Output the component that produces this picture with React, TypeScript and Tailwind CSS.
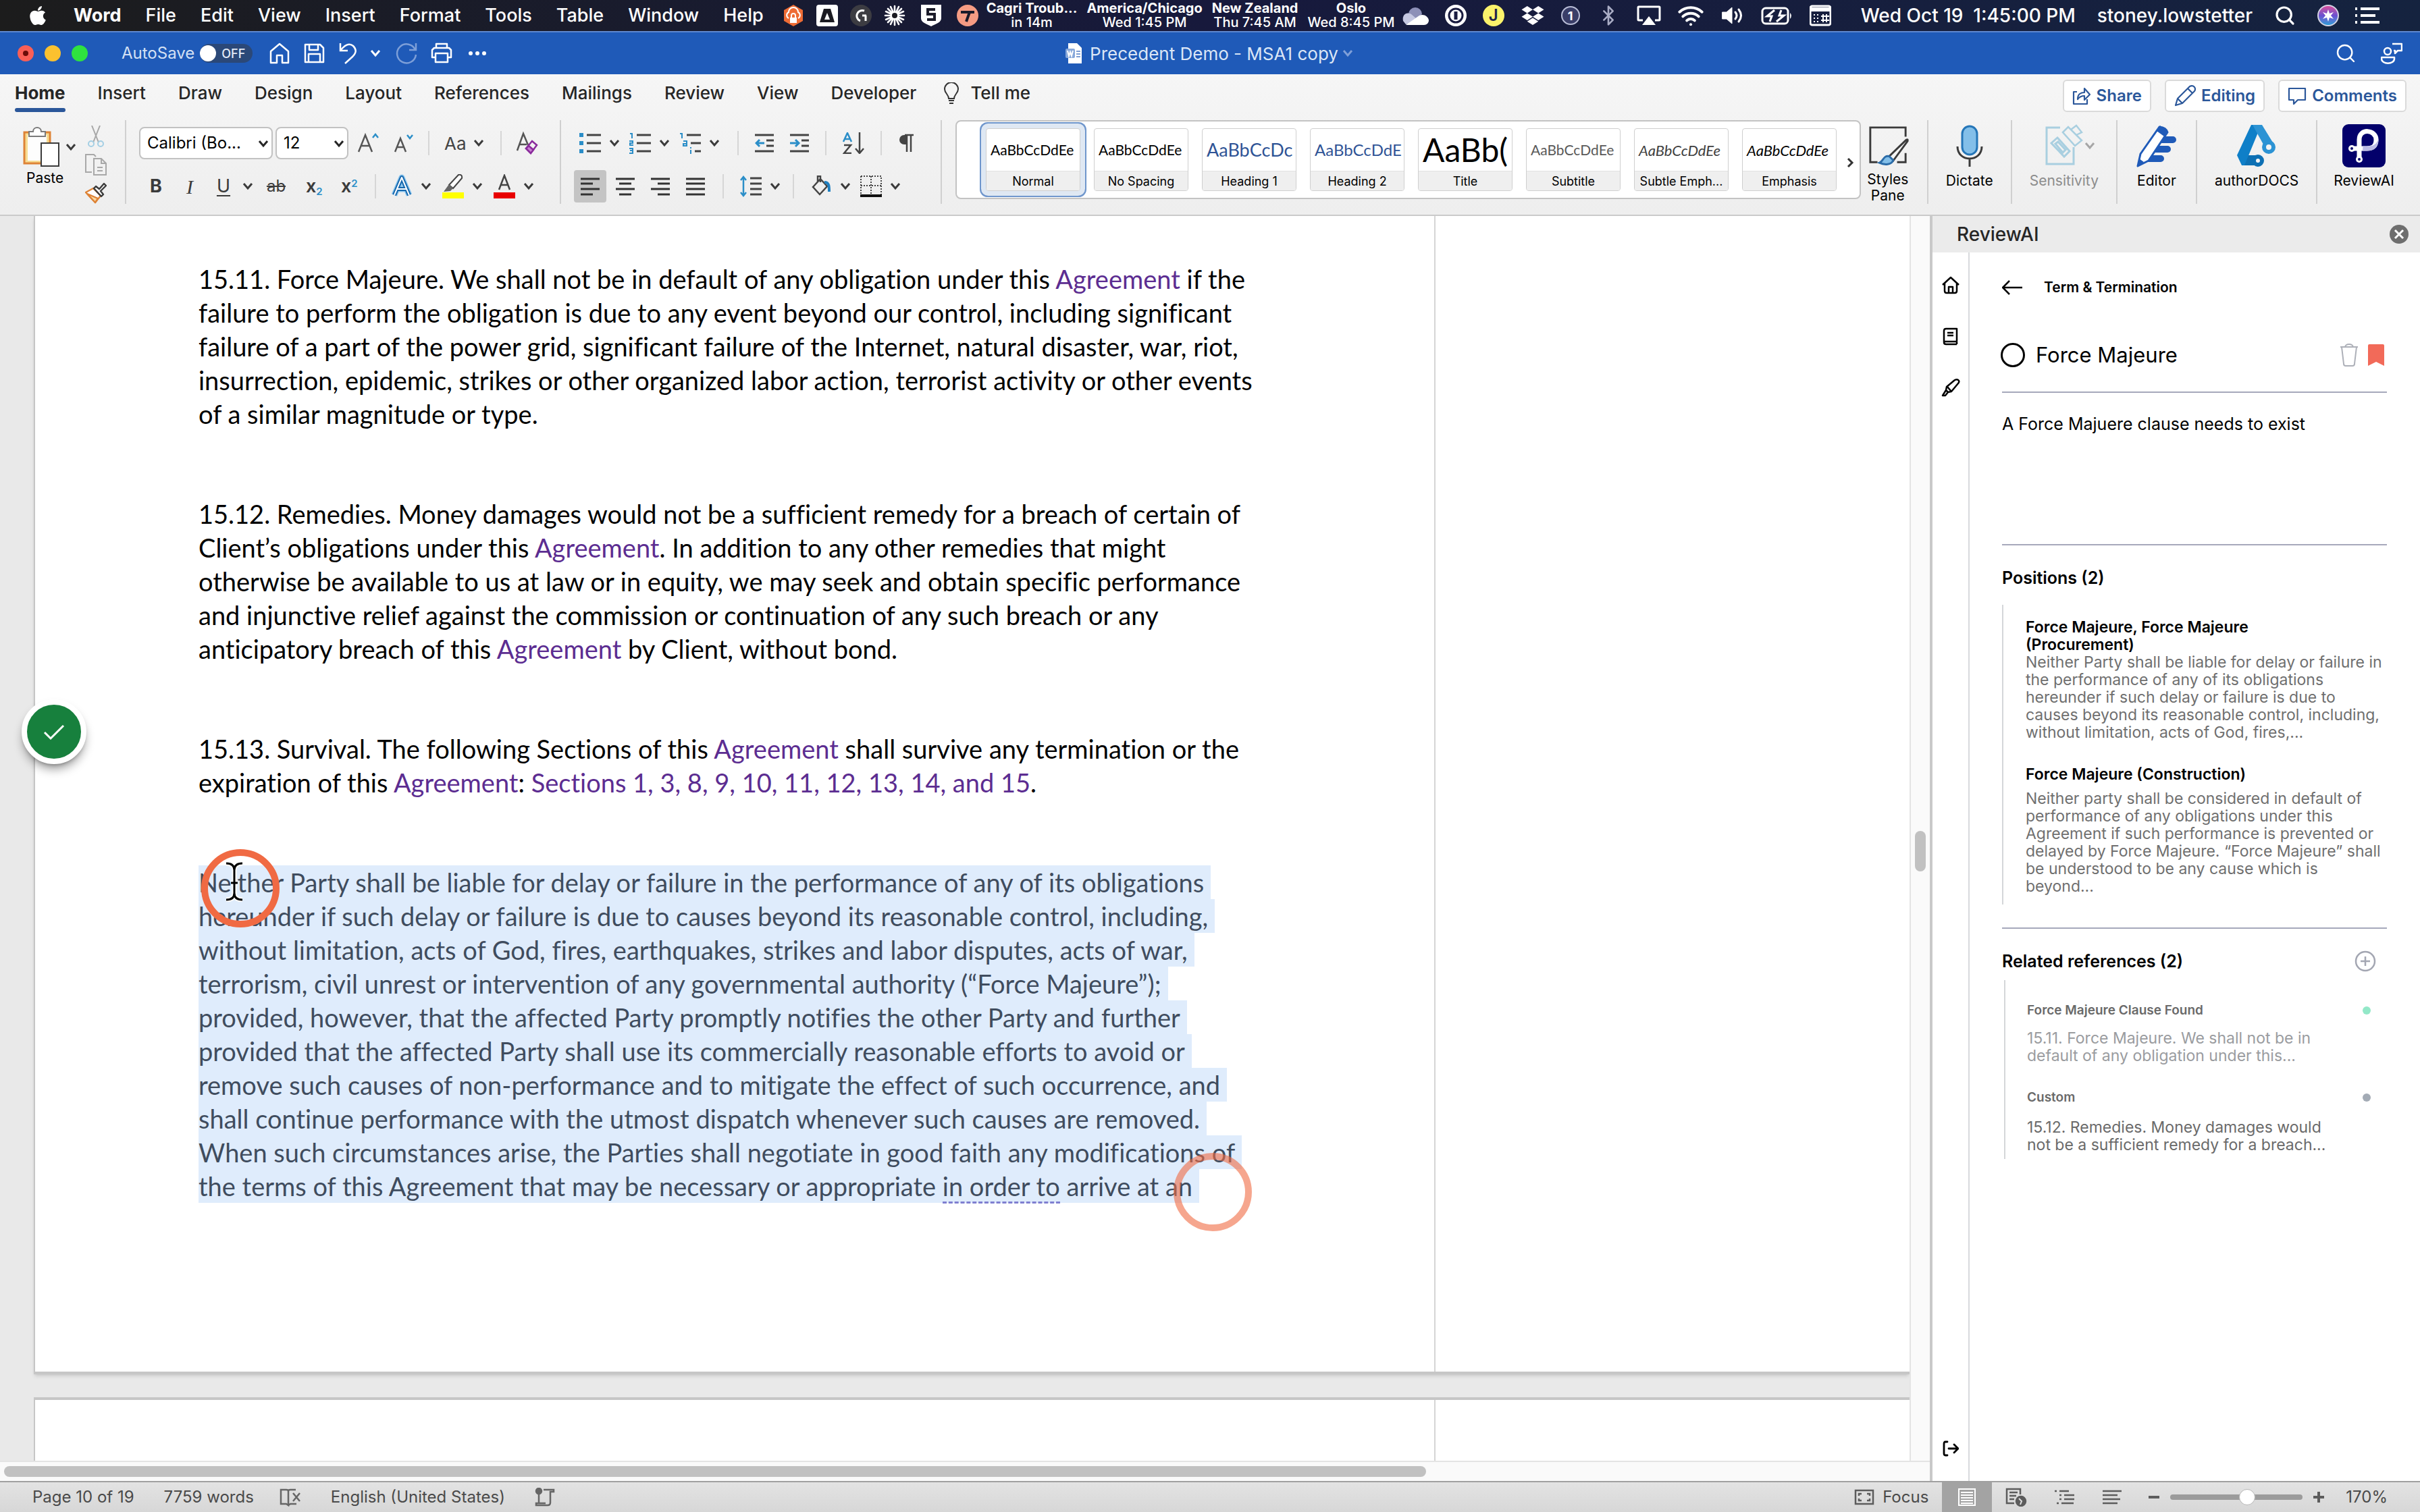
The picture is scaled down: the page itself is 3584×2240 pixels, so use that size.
import type { ReactNode } from 'react';
import { FaApple, FaDropbox } from 'react-icons/fa';
import { Bluetooth, Search, Wifi } from 'lucide-react';

const MENUS = ['File', 'Edit', 'View', 'Insert', 'Format', 'Tools', 'Table', 'Window', 'Help'];

const CLOCKS = [
  { place: 'Cagri Troub...', time: 'in 14m' },
  { place: 'America/Chicago', time: 'Wed 1:45 PM' },
  { place: 'New Zealand', time: 'Thu 7:45 AM' },
  { place: 'Oslo', time: 'Wed 8:45 PM' },
];

const TABS = ['Home', 'Insert', 'Draw', 'Design', 'Layout', 'References', 'Mailings', 'Review', 'View', 'Developer'];

const STYLES = [
  { name: 'Normal', sample: 'AaBbCcDdEe', look: 'text-[21px] text-black' },
  { name: 'No Spacing', sample: 'AaBbCcDdEe', look: 'text-[21px] text-black' },
  { name: 'Heading 1', sample: 'AaBbCcDc', look: 'text-[27px] text-[#2f5496]' },
  { name: 'Heading 2', sample: 'AaBbCcDdE', look: 'text-[24px] text-[#2f5496]' },
  { name: 'Title', sample: 'AaBb(', look: 'text-[48px] text-black' },
  { name: 'Subtitle', sample: 'AaBbCcDdEe', look: 'text-[21px] text-[#5a5a5a]' },
  { name: 'Subtle Emph...', sample: 'AaBbCcDdEe', look: 'text-[22px] italic text-[#404040]' },
  { name: 'Emphasis', sample: 'AaBbCcDdEe', look: 'text-[22px] italic text-black' },
];

const SELECTED_LINES: ReactNode[] = [
  'Neither Party shall be liable for delay or failure in the performance of any of its obligations',
  'hereunder if such delay or failure is due to causes beyond its reasonable control, including,',
  'without limitation, acts of God, fires, earthquakes, strikes and labor disputes, acts of war,',
  'terrorism, civil unrest or intervention of any governmental authority (“Force Majeure”);',
  'provided, however, that the affected Party promptly notifies the other Party and further',
  'provided that the affected Party shall use its commercially reasonable efforts to avoid or',
  'remove such causes of non-performance and to mitigate the effect of such occurrence, and',
  'shall continue performance with the utmost dispatch whenever such causes are removed.',
  'When such circumstances arise, the Parties shall negotiate in good faith any modifications of',
  <>
    the terms of this Agreement that may be necessary or appropriate{' '}
    <span className="border-b-3 border-dashed border-[#7f7fd0]">in order to</span> arrive at an
  </>,
];

export default function App() {
  return (
    <div className="flex h-screen flex-col overflow-hidden bg-[#ececec] font-['Inter',sans-serif] text-[#262626]">
      <MenuBar />
      <TitleBar />
      <Ribbon />
      <div className="flex min-h-0 flex-1">
        <DocumentArea />
        <ReviewPane />
      </div>
      <StatusBar />
    </div>
  );
}

/* ---------- macOS menu bar ---------- */

function MenuBar() {
  return (
    <header className="flex h-[46px] flex-none items-center bg-linear-to-r from-[#1c1c1c] via-[#17193c] to-[#15233f] pr-[60px] pl-10 text-[27px] font-medium text-white">
      <FaApple className="h-8 w-8" />
      <nav className="ml-[37px] flex items-center gap-9">
        <button className="font-bold">Word</button>
        {MENUS.map((m) => (
          <button key={m}>{m}</button>
        ))}
      </nav>
      <div className="ml-7 flex items-center gap-[18px]">
        <svg className="h-8 w-8" viewBox="0 0 32 32">
          <path d="M16 0 30 8v16l-14 8L2 24V8z" fill="#ee6c35" />
          <path d="M9 20a5 5 0 0 1 0-9 7 7 0 0 1 14 0 5 5 0 0 1 0 9" fill="none" stroke="#fff" strokeWidth="2" />
          <path d="M11 19h10v8H11z" fill="#fff" />
          <path d="M13 19v-3a3 3 0 0 1 6 0v3" fill="none" stroke="#fff" strokeWidth="2" />
        </svg>
        <svg className="h-8 w-8" viewBox="0 0 32 32">
          <rect width="32" height="32" rx="4" fill="#fff" />
          <path d="M11 6h10l6 20H5z" fill="#1b1b22" />
          <path d="m16 12 4 10h-8z" fill="#fff" />
        </svg>
        <svg className="h-8 w-8" viewBox="0 0 32 32">
          <circle cx="16" cy="16" r="16" fill="#3c3c42" />
          <path d="M21 9a8 8 0 1 0-6 15M24 16h-6M23 16v8" fill="none" stroke="#fff" strokeWidth="3" />
        </svg>
        <svg className="h-8 w-8" viewBox="0 0 32 32" stroke="#fff" strokeLinecap="round">
          <path d="M16 2v28M2 16h28M6 6l20 20M26 6 6 26M10 3l12 26M22 3 10 29M3 10l26 12M3 22l26-12" strokeWidth="2.6" />
          <circle cx="16" cy="16" r="4" fill="#1b1b22" stroke="none" />
        </svg>
        <svg className="ml-1 h-8 w-8" viewBox="0 0 32 32">
          <path d="M1 0h30v20c0 6-7 8-15 12C8 28 1 26 1 20z" fill="#fff" />
          <path d="M22 7H11v7h10v8H10" fill="none" stroke="#1b1b2a" strokeWidth="4" />
        </svg>
        <svg className="ml-1 h-8 w-8" viewBox="0 0 32 32">
          <circle cx="16" cy="16" r="16" fill="#f59b83" />
          <path d="M6 11h20M19 11l-5 14" fill="none" stroke="#1b1b2a" strokeWidth="4" />
        </svg>
      </div>
      <div className="ml-3 flex gap-3.5 text-center text-[20px] leading-[21px]">
        {CLOCKS.map((c) => (
          <div key={c.place}>
            <div className="font-bold">{c.place}</div>
            <div>{c.time}</div>
          </div>
        ))}
      </div>
      <div className="ml-auto flex items-center gap-6">
        <svg className="h-8 w-10" viewBox="0 0 40 32">
          <path d="M10 14a10 10 0 0 1 20 0l-10 8z" fill="#8d90b8" />
          <path d="M2 24C0 14 8 10 14 14l14 12-22 3z" fill="#c5c8e2" />
          <path d="M6 30 26 16c6-3 13 1 14 7 0 4-3 7-7 7z" fill="#fff" />
        </svg>
        <svg className="h-8 w-8" viewBox="0 0 32 32">
          <circle cx="16" cy="16" r="16" fill="#fff" />
          <circle cx="16" cy="16" r="10" fill="none" stroke="#1a1c40" strokeWidth="3" />
          <path d="M16 10v12" stroke="#1a1c40" strokeWidth="5" />
        </svg>
        <span className="flex h-8 w-8 items-center justify-center rounded-full bg-[#fbf36b] text-[24px] font-semibold text-[#20224a]">
          J
        </span>
        <FaDropbox className="h-8 w-9" />
        <span className="flex h-7 w-7 items-center justify-center rounded-full border-2 border-[#b9bdd6] bg-[#3a3e68] text-[18px] font-bold">
          1
        </span>
        <Bluetooth className="h-8 w-9 text-[#a9acc4]" strokeWidth={2} />
        <svg className="h-8 w-9" viewBox="0 0 36 32" fill="none" stroke="#fff" strokeWidth="3">
          <path d="M9 23H3a1 1 0 0 1-1-1V4a1 1 0 0 1 1-1h30a1 1 0 0 1 1 1v18a1 1 0 0 1-1 1h-6" />
          <path d="m18 17 10 13H8z" fill="#fff" stroke="none" />
        </svg>
        <Wifi className="h-10 w-10" strokeWidth={2.4} />
        <svg className="h-8 w-9" viewBox="0 0 36 32" fill="none" stroke="#fff" strokeWidth="3" strokeLinecap="round">
          <path d="M3 11h6l8-7v24l-8-7H3z" fill="#fff" strokeWidth="1" />
          <path d="M22 11q4 5 0 10M27 7q7 9 0 18" />
        </svg>
        <svg className="h-8 w-12" viewBox="0 0 48 32">
          <rect x="2" y="5" width="38" height="23" rx="5" fill="none" stroke="#fff" strokeWidth="3" />
          <path d="M43 12q4 4 0 9z" fill="#fff" />
          <path d="M20 8 9 17h7l-3 8M23 25l11-9h-7l3-8" fill="none" stroke="#fff" strokeWidth="3" />
        </svg>
        <svg className="h-8 w-8" viewBox="0 0 32 32">
          <rect x="1" y="2" width="30" height="28" rx="3" fill="none" stroke="#fff" strokeWidth="3" />
          <path d="M1 4h30v6H1z" fill="#fff" />
          <path d="M6 15h2M6 20h2M6 25h2M11 15h2M11 20h2M11 25h2" stroke="#fff" strokeWidth="2" />
          <path d="M20 14v12M25 14v12M17 17h12M17 23h12" stroke="#fff" strokeWidth="2" />
        </svg>
        <span className="ml-5 text-[28px] whitespace-pre">Wed Oct 19  1:45:00 PM</span>
        <span className="ml-2 text-[28px]">stoney.lowstetter</span>
        <Search className="ml-2 h-8 w-8" strokeWidth={2.4} />
        <span className="ml-2 flex h-8 w-8 items-center justify-center rounded-full border-2 border-[#d4d4e4] bg-linear-to-b from-[#d8479a] via-[#6a4fd0] to-[#1b9ad8]">
          <svg className="h-6 w-6" viewBox="0 0 24 24" fill="#fff">
            <path d="m12 3 2 6 6-2-4 5 4 5-6-2-2 6-2-6-6 2 4-5-4-5 6 2z" />
          </svg>
        </span>
        <svg className="h-8 w-9" viewBox="0 0 36 32" stroke="#fff" strokeWidth="4">
          <path d="M0 6h3M8 6h28M0 16h3M8 16h22M0 26h3M8 26h28" />
        </svg>
      </div>
    </header>
  );
}

/* ---------- window title ---------- */

function TitleBar() {
  return (
    <div className="flex h-16 flex-none items-center border-t-2 border-[#5d87cf] bg-[#1f5ab8] px-[26px] text-white">
      <div className="flex flex-1 items-center">
        <div className="flex gap-4">
          <button aria-label="Close" className="flex h-6 w-6 items-center justify-center rounded-full bg-[#f95f56]">
            <span className="h-2 w-2 rounded-full bg-[#6b0d08]" />
          </button>
          <button aria-label="Minimize" className="h-6 w-6 rounded-full bg-[#fbc12f]" />
          <button aria-label="Zoom" className="h-6 w-6 rounded-full bg-[#2fe23f]" />
        </div>
        <span className="ml-[50px] text-[24px] text-[#d3e0f4]">AutoSave</span>
        <button
          role="switch"
          aria-checked="false"
          aria-label="AutoSave"
          className="ml-2 flex h-7 w-[78px] items-center gap-2 rounded-full bg-[#2b4878] text-[18px] font-medium text-[#e3ebf7]"
        >
          <span className="h-6 w-6 rounded-full bg-white" />
          OFF
        </button>
        <div className="ml-6 flex items-center gap-5">
          <IconButton label="Home">
            <svg className="h-8 w-8" viewBox="0 0 32 32" fill="none" stroke="#fff" strokeWidth="2.5">
              <path d="M3 13 16 2l13 11v17h-9V19h-8v11H3z" strokeLinejoin="round" />
            </svg>
          </IconButton>
          <IconButton label="Save">
            <svg className="h-8 w-8" viewBox="0 0 32 32" fill="none" stroke="#fff" strokeWidth="2.5">
              <path d="M2 3h22l5 5v21H2zM8 3v8h13V3M7 29V17h17v12" strokeLinejoin="round" />
            </svg>
          </IconButton>
          <IconButton label="Undo">
            <svg className="h-8 w-7" viewBox="0 0 28 32" fill="none" stroke="#fff" strokeWidth="2.5">
              <path d="M2 1v11h11M2 12C8 4 15 0 21 5c6 6 4 11-1 16L9 31" />
            </svg>
          </IconButton>
          <Chevron className="-ml-1 text-white" />
          <IconButton label="Redo">
            <svg className="h-8 w-8" viewBox="0 0 32 32" fill="none" stroke="#7d9fd8" strokeWidth="2.5">
              <path d="M30 1v10H20M29 11A14 14 0 1 0 30 18" />
            </svg>
          </IconButton>
          <IconButton label="Print">
            <svg className="h-8 w-8" viewBox="0 0 32 32" fill="none" stroke="#fff" strokeWidth="2.5">
              <path d="M8 8V2h16v6M7 22H2V11l3-3h22l3 3v11h-5M7 16h18v13H7z" strokeLinejoin="round" />
            </svg>
          </IconButton>
          <IconButton label="More">
            <svg className="ml-1 h-8 w-7" viewBox="0 0 28 32" fill="#fff">
              <circle cx="3" cy="16" r="3" />
              <circle cx="13" cy="16" r="3" />
              <circle cx="23" cy="16" r="3" />
            </svg>
          </IconButton>
        </div>
      </div>
      <div className="flex items-center text-[26px] text-[#dbe6f6]">
        <svg className="mr-3 h-[30px] w-6" viewBox="0 0 24 30">
          <path d="M4 0h13l7 7v23H4z" fill="#fff" />
          <rect y="8" width="14" height="14" rx="2" fill="#88a8da" />
          <path d="m3 11 2 8 2-6 2 6 2-8" fill="none" stroke="#fff" strokeWidth="2" />
          <path d="M16 12h6M16 16h6M16 20h6" stroke="#7f9fd4" strokeWidth="2" />
        </svg>
        Precedent Demo - MSA1 copy
        <Chevron className="ml-1 text-[#7f9fd8]" />
      </div>
      <div className="flex flex-1 items-center justify-end gap-9">
        <IconButton label="Search">
          <Search className="h-8 w-8" strokeWidth={1.8} />
        </IconButton>
        <IconButton label="Presence">
          <svg className="h-8 w-8" viewBox="0 0 32 32" fill="none" stroke="#fff" strokeWidth="2.5">
            <circle cx="10" cy="13" r="5" />
            <path d="M1 22h19v2c0 9-19 9-19 0zM17 2h14v10h-6l-4 4v-4h-2" strokeLinejoin="round" />
          </svg>
        </IconButton>
      </div>
    </div>
  );
}

/* ---------- ribbon ---------- */

function Ribbon() {
  return (
    <section className="flex-none border-b-2 border-[#cacaca] bg-linear-to-b from-[#f6f6f6] to-[#eeeeee] pb-4">
      <div className="flex h-[68px] items-start pr-5 pl-[22px]">
        <nav className="flex items-start gap-12 pt-2.5 text-[26px] font-medium">
          {TABS.map((tab) =>
            tab === 'Home' ? (
              <button key={tab} className="flex flex-col font-bold">
                <span className="leading-9">{tab}</span>
                <span className="mt-1 h-1.5 w-full rounded-full bg-[#2b579a]" />
              </button>
            ) : (
              <button key={tab} className="leading-9">
                {tab}
              </button>
            ),
          )}
          <button className="flex items-center gap-4 leading-9">
            <svg className="-ml-2 h-8 w-6" viewBox="0 0 24 32" fill="none" stroke="#333" strokeWidth="2">
              <path d="M8 24c0-6-6-8-6-14a10 10 0 0 1 20 0c0 6-6 8-6 14zM8 27h8M9 31h6" />
            </svg>
            Tell me
          </button>
        </nav>
        <div className="ml-auto flex gap-5 pt-2 text-[24px] font-semibold text-[#2b579a]">
          <PillButton label="Share">
            <svg className="h-7 w-7" viewBox="0 0 28 28" fill="none" stroke="#2b579a" strokeWidth="2.2">
              <path d="M7 8H2v18h20v-7M8 19c0-8 5-10 10-10V3l8 9-8 8v-6c-4 0-7 1-10 5z" strokeLinejoin="round" />
            </svg>
          </PillButton>
          <PillButton label="Editing">
            <svg className="h-8 w-8" viewBox="0 0 32 32" fill="none" stroke="#2b579a" strokeWidth="2.2">
              <path d="m2 30 3-10L23 2q4-2 7 1 2 3 0 6L12 27zM20 5l7 7M5 20l7 7" strokeLinejoin="round" />
            </svg>
          </PillButton>
          <PillButton label="Comments">
            <svg className="h-7 w-7" viewBox="0 0 28 28" fill="none" stroke="#2b579a" strokeWidth="2.2">
              <path d="M2 3h24v17H15l-6 6v-6H2z" strokeLinejoin="round" />
            </svg>
          </PillButton>
        </div>
      </div>

      <div className="flex h-[124px]">
        <ClipboardGroup />
        <Divider />
        <FontGroup />
        <Divider />
        <ParagraphGroup />
        <Divider />
        <StyleGallery />
        <BigButton label="Styles Pane" className="mr-[26px] ml-2 w-16">
          <svg className="h-16 w-16" viewBox="0 0 64 64" fill="none" stroke="#3b3b3b" strokeWidth="3">
            <path d="M16 58H5V5h54v14M59 44v14H46" />
            <path d="M60 24q3-2 2 2L40 56l-7-6z" fill="#f5f5f5" />
            <path d="M34 49c-9-2-9 8-15 10 8 4 19 3 21-4z" fill="#83bfe9" stroke="#2b6ca8" />
          </svg>
        </BigButton>
        <Divider />
        <BigButton label="Dictate" className="px-[26px]">
          <svg className="h-16 w-16" viewBox="0 0 64 64" fill="none" stroke="#3b3b3b" strokeWidth="3">
            <rect x="21" y="3" width="22" height="42" rx="11" fill="#83bfe9" stroke="#2576b8" />
            <path d="M14 33c0 24 36 24 36 0M32 51v12" />
          </svg>
        </BigButton>
        <Divider />
        <BigButton label="Sensitivity" className="px-[26px] text-[#8c8c8c]">
          <span className="flex items-center">
            <svg className="ml-5 h-16 w-14" viewBox="0 0 56 64" fill="none" stroke="#a9cfe0" strokeWidth="3">
              <path d="M22 5H2v54h40V34" />
              <path d="m9 28 9-8 18 20-8 8zM15 29l4-3 11 12-4 4z" />
              <path d="m26 12 8-8 20 20-10 8zM38 8l8-6 8 10-8 4" strokeWidth="2.5" />
            </svg>
            <Chevron className="text-[#a6a6a6]" />
          </span>
        </BigButton>
        <Divider />
        <BigButton label="Editor" className="px-[26px]">
          <svg className="h-16 w-16" viewBox="0 0 64 64">
            <path d="M38 18h18a5 5 0 0 1 0 10H32zM30 32h18a5 5 0 0 1 0 10H24zM22 46h16a5 5 0 0 1 0 10H14z" fill="#1f5ab8" />
            <path d="M4 62 8 44 36 4q10 1 12 8L20 54z" fill="#fff" stroke="#1f5ab8" strokeWidth="3" strokeLinejoin="round" />
            <path d="m37 2 11 8-5 8-11-8zM3 63l3-12 7 5z" fill="#1f5ab8" />
          </svg>
        </BigButton>
        <Divider />
        <BigButton label="authorDOCS" className="px-[26px]">
          <svg className="h-16 w-16" viewBox="0 0 64 64">
            <path d="M15 46h22v15H12z" fill="#0d70b4" />
            <path d="M24 1h12l-3 14L14 61h-4L3 46z" fill="#0f7fc8" />
            <path d="M26 1h14l16 26-10 10L32 12z" fill="#2c93d4" />
            <circle cx="50" cy="34" r="7" fill="#f4f4f4" stroke="#2c93d4" strokeWidth="6" />
            <circle cx="34" cy="54" r="6" fill="#f4f4f4" stroke="#0d70b4" strokeWidth="6" />
          </svg>
        </BigButton>
        <Divider />
        <BigButton label="ReviewAI" className="pr-[38px] pl-6">
          <svg className="h-16 w-16" viewBox="0 0 64 64">
            <rect width="64" height="64" rx="9" fill="#03006b" />
            <path d="M25 52V23C25 5 50 8 50 23c0 12-8 13-14 13H14" fill="none" stroke="#fff" strokeWidth="7" />
            <path d="M30 39.500h7c12 0 17-9 16.500-18-2 8-8 11-15 11h-8z" fill="#bcbbe6" />
            <circle cx="14" cy="36" r="5" fill="#fff" />
            <circle cx="25" cy="52" r="5" fill="#fff" />
            <circle cx="14" cy="36" r="2" fill="#03006b" />
            <circle cx="25" cy="52" r="2" fill="#03006b" />
          </svg>
        </BigButton>
      </div>
    </section>
  );
}

function ClipboardGroup() {
  return (
    <div className="flex w-[185px] pt-2 pl-[33px]">
      <button className="flex w-[78px] flex-col items-start text-[21px] text-black">
        <span className="flex items-center gap-1.5">
          <svg className="h-16 w-14 flex-none" viewBox="0 0 56 64" fill="none" strokeWidth="3">
            <path d="M3 10h38v46H3z" stroke="#de8336" fill="#f7dc93" />
            <path d="M8 14h28v38H8z" fill="#fdfdfd" />
            <path d="M10 16V9h6c0-8 12-8 12 0h6v7z" fill="#fff" stroke="#7a7a7a" strokeWidth="2" />
            <path d="M28 26h26v34H28z" fill="#fff" stroke="#3b3b3b" strokeWidth="2" />
          </svg>
          <Chevron />
        </span>
        <span className="pl-1.5 leading-7">Paste</span>
      </button>
      <div className="ml-[15px] flex flex-col gap-2.5">
        <IconButton label="Cut">
          <svg className="h-8 w-8" viewBox="0 0 32 32" fill="none" strokeWidth="2">
            <path d="m10 0 10 25M22 0 12 25" stroke="#a8a8a8" />
            <circle cx="9" cy="27" r="4" stroke="#a4cfe4" />
            <circle cx="23" cy="27" r="4" stroke="#a4cfe4" />
          </svg>
        </IconButton>
        <IconButton label="Copy">
          <svg className="h-8 w-8" viewBox="0 0 32 32" fill="none" stroke="#a8a8a8" strokeWidth="2">
            <path d="M10 27H1V1h12l3 3" />
            <path d="M13 7h11l7 7v17H13zM24 7v7h7M18 20h8M18 25h8" />
          </svg>
        </IconButton>
        <IconButton label="Format painter">
          <svg className="h-8 w-8" viewBox="0 0 32 32" strokeWidth="2.4" strokeLinejoin="round">
            <path d="m12 9 11 11-8 10L1 15z" fill="#fff" stroke="#de8336" />
            <path d="m3 17 16 7-4 6z" fill="#fbd9a0" stroke="#de8336" />
            <path d="m13 9 3-3 5 4 7-8 3 3-8 8 4 5-3 3z" fill="#f6f6f6" stroke="#3b3b3b" />
          </svg>
        </IconButton>
      </div>
    </div>
  );
}

function FontGroup() {
  return (
    <div className="flex w-[642px] flex-col gap-4 pt-2.5 pl-[19px]">
      <div className="flex h-12 items-center">
        <RibbonSelect label="Font" value="Calibri (Bo..." className="w-[198px]" />
        <RibbonSelect label="Font size" value="12" className="ml-1 w-[108px]" />
        <div className="ml-3.5 flex h-9 items-center gap-[22px] text-[#444]">
          <IconButton label="Increase font size">
            <svg className="h-8 w-8" viewBox="0 0 32 32" fill="none" strokeWidth="2.5">
              <path d="M1 29 11 4l10 25M5 20h12" stroke="#555" />
              <path d="m22 8 4-5 4 5" stroke="#2b8ec8" />
            </svg>
          </IconButton>
          <IconButton label="Decrease font size">
            <svg className="h-8 w-7" viewBox="0 0 28 32" fill="none" strokeWidth="2.5">
              <path d="m1 29 8-20 8 20M4 22h10" stroke="#555" />
              <path d="m19 4 4 5 4-5" stroke="#2b8ec8" />
            </svg>
          </IconButton>
          <Rule />
          <button className="flex items-center gap-2 text-[26px]">
            Aa
            <Chevron />
          </button>
          <Rule />
          <IconButton label="Clear formatting">
            <svg className="h-9 w-8" viewBox="0 0 32 36" fill="none" strokeWidth="2.5">
              <path d="M1 29 10 4l8 19M5 20h10" stroke="#555" />
              <path d="m14 26 9-11 7 6-9 12z" stroke="#8a2b9c" />
              <path d="m14 26 4-4 7 6-4 5z" fill="#c97fd2" stroke="#8a2b9c" />
            </svg>
          </IconButton>
        </div>
      </div>
      <div className="flex h-12 items-center pl-[13px] text-[27px] text-[#3b3b3b]">
        <button className="w-6 font-bold">B</button>
        <button className="ml-[26px] w-6 font-['Liberation_Serif',serif] text-[30px] italic">I</button>
        <button className="ml-[26px] w-6 underline decoration-2 underline-offset-4">U</button>
        <Chevron className="ml-3.5" />
        <button className="ml-4 w-8 text-[24px] line-through">ab</button>
        <button className="ml-7 w-7 text-left font-semibold">
          x<sub className="text-[15px] text-[#2b8ec8]">2</sub>
        </button>
        <button className="ml-6 w-7 text-left font-semibold">
          x<sup className="text-[15px] text-[#2b8ec8]">2</sup>
        </button>
        <Rule className="mx-[22px]" />
        <div className="flex gap-3.5">
          <Combo label="Text effects">
            <svg className="h-9 w-8" viewBox="0 0 32 36" fill="none" strokeLinejoin="round">
              <path d="M5 31 16 5l11 26M9 22h14" stroke="#8cc6ee" strokeWidth="9" />
              <path d="M5 31 16 5l11 26M9 22h14" stroke="#1668ae" strokeWidth="6" />
              <path d="M5 31 16 5l11 26M9 22h14" stroke="#fff" strokeWidth="2" />
            </svg>
          </Combo>
          <Combo label="Highlight color">
            <svg className="h-9 w-8" viewBox="0 0 32 36">
              <rect y="27" width="32" height="9" fill="#ffff00" />
              <path d="M10 16 24 1q6-1 5 5L16 21z" fill="#fff" stroke="#444" strokeWidth="2" />
              <path d="m10 15 6 6-4 4-10 1z" fill="#666" />
            </svg>
          </Combo>
          <Combo label="Font color">
            <svg className="h-9 w-8" viewBox="0 0 32 36">
              <rect y="27" width="32" height="9" fill="#e80000" />
              <path d="m8 23 8-21 8 21M11 16h10" fill="none" stroke="#444" strokeWidth="2.5" />
            </svg>
          </Combo>
        </div>
      </div>
    </div>
  );
}

function ParagraphGroup() {
  return (
    <div className="flex w-[562px] flex-col gap-4 pt-2.5 pl-[19px]">
      <div className="flex h-12 items-center gap-6 pl-2">
        <div className="flex gap-3">
          <Combo label="Bullets">
            <svg className="h-8 w-8" viewBox="0 0 32 32" strokeWidth="3">
              <path d="M0 4h6M0 16h6M0 28h6" stroke="#2b8ec8" strokeWidth="6" />
              <path d="M11 4h21M11 16h21M11 28h21" stroke="#444" />
            </svg>
          </Combo>
          <Combo label="Numbering">
            <svg className="h-8 w-8" viewBox="0 0 32 32" strokeWidth="3">
              <path d="M1 2h3v7M0 13h5v3H1v3h5M0 24h5v7H0M1 27h4" fill="none" stroke="#2b8ec8" strokeWidth="2" />
              <path d="M11 4h21M11 16h21M11 28h21" stroke="#444" />
            </svg>
          </Combo>
          <Combo label="Multilevel list">
            <svg className="h-8 w-8" viewBox="0 0 32 32" strokeWidth="3">
              <path d="M1 2h3v7M6 13h5v7H6v-3h5M17 22v2M17 26v6" fill="none" stroke="#2b8ec8" strokeWidth="2" />
              <path d="M11 4h21M17 16h15M23 28h9" stroke="#444" />
            </svg>
          </Combo>
        </div>
        <Rule />
        <IconButton label="Decrease indent">
          <svg className="h-8 w-7" viewBox="0 0 28 32" fill="none" strokeWidth="3">
            <path d="M0 4h28M17 12h11M17 20h11M0 28h28" stroke="#444" />
            <path d="M14 16H2M7 11l-5 5 5 5" stroke="#2b8ec8" />
          </svg>
        </IconButton>
        <IconButton label="Increase indent">
          <svg className="h-8 w-7" viewBox="0 0 28 32" fill="none" strokeWidth="3">
            <path d="M0 4h28M17 12h11M17 20h11M0 28h28" stroke="#444" />
            <path d="M0 16h12M8 11l5 5-5 5" stroke="#2b8ec8" />
          </svg>
        </IconButton>
        <Rule />
        <IconButton label="Sort">
          <svg className="h-8 w-8" viewBox="0 0 32 32" fill="none" strokeWidth="2.5">
            <path d="M1 14 7 1l6 13M3 10h8" stroke="#2b8ec8" />
            <path d="M2 19h10L2 31h11M25 0v31M19 24l6 7 6-7" stroke="#444" />
          </svg>
        </IconButton>
        <Rule />
        <IconButton label="Show marks">
          <svg className="h-7 w-6" viewBox="0 0 24 28">
            <path d="M13 2H9a7 7 0 0 0 0 14h4z" fill="#444" />
            <path d="M10 2h13M13 2v25M19 2v25" stroke="#444" strokeWidth="2.5" />
          </svg>
        </IconButton>
      </div>
      <div className="flex h-12 items-center">
        <div className="flex gap-1">
          <AlignButton label="Align left" d="M0 3h28M0 10h18M0 18h28M0 26h18" active />
          <AlignButton label="Center" d="M0 3h28M5 10h18M0 18h28M5 26h18" />
          <AlignButton label="Align right" d="M0 3h28M10 10h18M0 18h28M10 26h18" />
          <AlignButton label="Justify" d="M0 3h28M0 10h28M0 18h28M0 26h28" />
        </div>
        <Rule className="mr-6 ml-4" />
        <Combo label="Line spacing">
          <svg className="h-8 w-8" viewBox="0 0 32 32" fill="none" strokeWidth="3">
            <path d="M15 4h17M15 12h17M15 20h17M15 28h17" stroke="#444" />
            <path d="M5 2v28M1 7l4-5 4 5M1 25l4 5 4-5" stroke="#2b8ec8" strokeWidth="2.5" />
          </svg>
        </Combo>
        <Rule className="mr-6 ml-4" />
        <div className="flex gap-3">
          <Combo label="Shading">
            <svg className="h-8 w-8" viewBox="0 0 32 32" fill="none" strokeWidth="2.5">
              <path d="m4 17 11-12 10 11-11 12zM11 9V1h4v9" stroke="#444" />
              <path d="M21 10c7 0 7 6 7 14" stroke="#1f7fc0" strokeWidth="4" />
            </svg>
          </Combo>
          <Combo label="Borders">
            <svg className="h-8 w-8" viewBox="0 0 32 32" fill="none" stroke="#444" strokeWidth="2">
              <path d="M1 1h30v28M1 1v28M16 1v28M1 15h30" strokeDasharray="2 2" />
              <path d="M0 30h32" stroke="#111" strokeWidth="4" />
            </svg>
          </Combo>
        </div>
      </div>
    </div>
  );
}

function StyleGallery() {
  return (
    <div className="ml-5 flex min-w-0 flex-1 items-center self-start rounded-lg border-2 border-[#c3c3c3] bg-white py-2.5 pl-[43px]">
      <div className="flex gap-5">
        {STYLES.map((s) => (
          <button
            key={s.name}
            className={
              'flex h-[93px] w-[140px] flex-none flex-col overflow-hidden rounded border border-[#cfcfcf] bg-white ' +
              (s.name === 'Normal' ? 'shadow-[0_0_0_7px_#dfe8f3,0_0_0_9px_#6f96cc]' : '')
            }
          >
            <span
              className={"flex h-[62px] w-full items-center pl-1.5 font-['Lato',sans-serif] whitespace-nowrap " + s.look}
            >
              {s.sample}
            </span>
            <span className="flex w-full flex-1 items-center justify-center border-t border-[#e2e2e2] bg-[#efefef] text-[18px] whitespace-nowrap text-black">
              {s.name}
            </span>
          </button>
        ))}
      </div>
      <button aria-label="More styles" className="mt-2 mr-2 ml-auto flex">
        <svg className="h-4 w-3" viewBox="0 0 12 16" fill="none" stroke="#333" strokeWidth="3">
          <path d="m3 2 6 6-6 6" />
        </svg>
      </button>
    </div>
  );
}

function Chevron({ className = 'text-[#3b3b3b]' }: { className?: string }) {
  return (
    <svg className={'h-3 w-5 flex-none ' + className} viewBox="0 0 20 12" fill="none" stroke="currentColor" strokeWidth="3">
      <path d="m4 2 6 7 6-7" />
    </svg>
  );
}

function Divider() {
  return <div className="w-0.5 flex-none bg-[#d0d0d0]" />;
}

function Rule({ className = '' }: { className?: string }) {
  return <div className={'h-9 w-0.5 flex-none bg-[#d6d6d6] ' + className} />;
}

function IconButton({ label, children }: { label: string; children: ReactNode }) {
  return (
    <button aria-label={label} className="flex flex-none">
      {children}
    </button>
  );
}

function Combo({ label, children }: { label: string; children: ReactNode }) {
  return (
    <button aria-label={label} className="flex flex-none items-center gap-2.5">
      {children}
      <Chevron />
    </button>
  );
}

function AlignButton({ label, d, active = false }: { label: string; d: string; active?: boolean }) {
  return (
    <button
      aria-label={label}
      className={'flex h-12 w-12 items-center justify-center rounded ' + (active ? 'bg-[#c4c4c4]' : '')}
    >
      <svg className="h-7 w-7" viewBox="0 0 28 28" stroke="#333" strokeWidth="3">
        <path d={d} />
      </svg>
    </button>
  );
}

function RibbonSelect({ label, value, className }: { label: string; value: string; className: string }) {
  return (
    <span className={'relative flex ' + className}>
      <select
        aria-label={label}
        className="h-12 w-full appearance-none rounded-lg border-2 border-[#c2c2c2] bg-white pl-2.5 text-[24px] text-black"
      >
        <option>{value}</option>
      </select>
      <Chevron className="pointer-events-none absolute top-[19px] right-1" />
    </span>
  );
}

function PillButton({ label, children }: { label: string; children: ReactNode }) {
  return (
    <button className="flex h-12 items-center gap-2 rounded-md border-2 border-[#dadada] bg-white px-3">
      {children}
      {label}
    </button>
  );
}

function BigButton({ label, className, children }: { label: string; className: string; children: ReactNode }) {
  return (
    <button className={'flex flex-none flex-col items-center pt-1.5 text-[21px] leading-6 text-black ' + className}>
      {children}
      <span className={'mt-2 ' + (label === 'Sensitivity' ? 'text-[#8c8c8c]' : '')}>{label}</span>
    </button>
  );
}

/* ---------- document ---------- */

function Term({ children }: { children: ReactNode }) {
  return (
    <a href="#agreement" className="text-[#5c2d91]">
      {children}
    </a>
  );
}

function DocumentArea() {
  return (
    <main className="flex min-w-0 flex-1 flex-col">
      <div className="flex min-h-0 flex-1">
        <div className="relative flex min-w-0 flex-1 flex-col gap-[34px] overflow-hidden bg-[#e9e9e9] pl-[50px]">
          <article className="flex flex-none border-b-4 border-l-2 border-[#c6c6c6] bg-white shadow-md">
            <div className="flex flex-1 flex-col gap-[98px] border-r-2 border-[#d5d5d5] pt-[68px] pb-[250px] pl-[242px] font-['Lato',sans-serif] text-[38px] leading-[50px] whitespace-nowrap text-black [font-variant-ligatures:none]">
              <p>
                15.11. Force Majeure. We shall not be in default of any obligation under this <Term>Agreement</Term> if the
                <br />
                failure to perform the obligation is due to any event beyond our control, including significant
                <br />
                failure of a part of the power grid, significant failure of the Internet, natural disaster, war, riot,
                <br />
                insurrection, epidemic, strikes or other organized labor action, terrorist activity or other events
                <br />
                of a similar magnitude or type.
              </p>
              <p>
                15.12. Remedies. Money damages would not be a sufficient remedy for a breach of certain of
                <br />
                Client’s obligations under this <Term>Agreement</Term>. In addition to any other remedies that might
                <br />
                otherwise be available to us at law or in equity, we may seek and obtain specific performance
                <br />
                and injunctive relief against the commission or continuation of any such breach or any
                <br />
                anticipatory breach of this <Term>Agreement</Term> by Client, without bond.
              </p>
              <p>
                15.13. Survival. The following Sections of this <Term>Agreement</Term> shall survive any termination or the
                <br />
                expiration of this <Term>Agreement</Term>: <Term>Sections 1, 3, 8, 9, 10, 11, 12, 13, 14, and 15</Term>.
              </p>
              <p className="text-[#3f4c5e]">
                {SELECTED_LINES.map((line, i) => (
                  <span key={i} className="block w-fit bg-[#dfecfc] pr-2.5">
                    {line}
                  </span>
                ))}
              </p>
            </div>
            <div className="w-[702px] flex-none" />
          </article>
          <article className="flex flex-1 border-t-4 border-l-2 border-[#c6c6c6] bg-white">
            <div className="flex-1 border-r-2 border-[#d5d5d5]" />
            <div className="w-[702px] flex-none" />
          </article>

          <span className="absolute top-[716px] left-8 flex h-24 w-24 items-center justify-center rounded-full border-8 border-white bg-[#17803d] shadow-lg shadow-black/40">
            <svg className="h-8 w-8" viewBox="0 0 32 32" fill="none" stroke="#fff" strokeWidth="3">
              <path d="m2 17 9 9L30 7" />
            </svg>
          </span>
          <span className="absolute top-[938px] left-[298px] h-[116px] w-[116px] rounded-full border-10 border-[#f06a43]" />
          <span className="absolute top-[1388px] left-[1738px] h-[116px] w-[116px] rounded-full border-10 border-[#f06a43]/60" />
          <svg className="absolute top-[956px] left-[333px] h-[60px] w-7" viewBox="0 0 28 60" fill="none">
            <path d="M2 3q12 0 12 10v34q0 10-12 10M26 3q-12 0-12 10v34q0 10 12 10M9 32h10" stroke="#fff" strokeWidth="7" />
            <path d="M2 3q12 0 12 10v34q0 10-12 10M26 3q-12 0-12 10v34q0 10 12 10M9 32h10" stroke="#000" strokeWidth="3" />
          </svg>
        </div>
        <div className="w-[30px] flex-none border-l-2 border-[#e4e4e4] bg-[#fafafa] pt-[911px] pl-1.5">
          <div className="h-[60px] w-4 rounded-full bg-[#c1c1c1]" />
        </div>
      </div>
      <div className="flex h-[30px] flex-none items-center border-t-2 border-[#e4e4e4] bg-[#fafafa] px-1.5">
        <div className="h-4 w-[74%] rounded-full bg-[#c1c1c1]" />
      </div>
    </main>
  );
}

/* ---------- add-in pane ---------- */

function ReviewPane() {
  return (
    <aside className="flex w-[726px] flex-none flex-col border-l-4 border-[#c9c9c9] bg-white">
      <div className="flex h-[54px] flex-none items-center justify-between bg-[#ebebeb] pr-[17px] pl-9">
        <h2 className="text-[28px] font-medium">ReviewAI</h2>
        <button aria-label="Close pane" className="flex h-7 w-7 items-center justify-center rounded-full bg-[#6e6e6e]">
          <svg className="h-4 w-4" viewBox="0 0 16 16" stroke="#fff" strokeWidth="3">
            <path d="m2 2 12 12M14 2 2 14" />
          </svg>
        </button>
      </div>
      <div className="flex flex-1">
        <nav className="flex w-[55px] flex-none flex-col items-center gap-12 border-r-2 border-[#d8dadd] pt-[34px] pb-9">
          <IconButton label="Home">
            <svg className="h-7 w-7" viewBox="0 0 28 28" fill="none" stroke="#000" strokeWidth="2.5" strokeLinejoin="round">
              <path d="M2 14 14 3l12 11M5 12v11q0 3 3 3h12q3 0 3-3V12M11 26v-9h6v9" />
            </svg>
          </IconButton>
          <IconButton label="Playbook">
            <svg className="h-7 w-7" viewBox="0 0 28 28" fill="none" stroke="#000" strokeWidth="2.5" strokeLinejoin="round">
              <path d="M23 21V3H7Q4 3 4 6v17q0 3 3 3h16M4 22h19v4M9 9h9M9 13h9" />
            </svg>
          </IconButton>
          <IconButton label="Highlighter">
            <svg className="h-7 w-7" viewBox="0 0 28 28" fill="none" stroke="#000" strokeWidth="2.5" strokeLinejoin="round">
              <path d="M8 13 20 3q4-2 6 1 1 2-1 4L15 20l-5 1-4 5H2l5-8zM9 13l6 7M7 18l3 3" />
            </svg>
          </IconButton>
          <button aria-label="Log out" className="mt-auto flex">
            <svg className="h-6 w-6" viewBox="0 0 24 24" fill="none" stroke="#000" strokeWidth="2.8" strokeLinecap="round">
              <path d="M7 2H4Q2 2 2 5v14q0 3 2 3h3M9 12h13M17 6l6 6-6 6" />
            </svg>
          </button>
        </nav>

        <div className="flex min-w-0 flex-1 flex-col pr-[49px] pl-12 text-[23px] leading-[26px]">
          <div className="mt-9 flex items-center gap-8">
            <IconButton label="Back">
              <svg className="h-6 w-[30px]" viewBox="0 0 30 24" fill="none" stroke="#000" strokeWidth="2.5">
                <path d="M30 12H2M11 2 1 12l10 10" />
              </svg>
            </IconButton>
            <h3 className="text-[21px] leading-8 font-semibold text-black">Term &amp; Termination</h3>
          </div>

          <div className="mt-[60px] flex h-12 items-center text-black">
            <label className="flex items-center gap-4 text-[31px]">
              <input type="checkbox" className="-ml-0.5 h-9 w-9 appearance-none rounded-full border-3 border-black" />
              Force Majeure
            </label>
            <div className="ml-auto flex items-center gap-3.5">
              <IconButton label="Delete">
                <svg className="h-9 w-7" viewBox="0 0 28 36" fill="none" stroke="#adb0b8" strokeWidth="2">
                  <path d="M1 6h26M8 6q1-4 6-4t6 4M3 6l3 25q0 3 3 3h10q3 0 3-3l3-25" />
                </svg>
              </IconButton>
              <IconButton label="Bookmark">
                <svg className="mr-1 h-8 w-6" viewBox="0 0 24 32" fill="#f26a59">
                  <path d="M2 0h20q2 0 2 2v30l-12-6-12 6V2q0-2 2-2z" />
                </svg>
              </IconButton>
            </div>
          </div>
          <hr className="mt-[30px] border-t-2 border-[#a6a8bb]" />

          <textarea
            aria-label="Clause requirement"
            readOnly
            className="mt-[30px] h-[194px] resize-none text-[25px] leading-8 text-black"
            value="A Force Majuere clause needs to exist"
          />
          <hr className="border-t-2 border-[#a6a8bb]" />

          <h4 className="mt-8 text-[25px] leading-8 font-semibold text-black">Positions (2)</h4>
          <div className="mt-6 border-l-2 border-[#d4d6d9] pt-5 pb-3.5 pl-[33px] whitespace-nowrap text-[#6f6f6f]">
            <h5 className="font-semibold text-black">
              Force Majeure, Force Majeure
              <br />
              (Procurement)
            </h5>
            <p>
              Neither Party shall be liable for delay or failure in
              <br />
              the performance of any of its obligations
              <br />
              hereunder if such delay or failure is due to
              <br />
              causes beyond its reasonable control, including,
              <br />
              without limitation, acts of God, fires,...
            </p>
            <h5 className="mt-9 mb-2.5 font-semibold text-black">Force Majeure (Construction)</h5>
            <p>
              Neither party shall be considered in default of
              <br />
              performance of any obligations under this
              <br />
              Agreement if such performance is prevented or
              <br />
              delayed by Force Majeure. “Force Majeure” shall
              <br />
              be understood to be any cause which is
              <br />
              beyond...
            </p>
          </div>
          <hr className="mt-[34px] border-t-2 border-[#a6a8bb]" />

          <div className="mt-8 flex items-center justify-between">
            <h4 className="text-[25px] leading-8 font-semibold text-black">Related references (2)</h4>
            <button aria-label="Add reference" className="mr-4 flex">
              <svg className="h-8 w-8" viewBox="0 0 32 32" fill="none" stroke="#a3a6b2" strokeWidth="2.5">
                <circle cx="16" cy="16" r="14" />
                <path d="M16 9v14M9 16h14" />
              </svg>
            </button>
          </div>
          <div className="mt-3 ml-[3px] border-l-2 border-[#d4d6d9] pt-8 pb-2 pl-8 whitespace-nowrap text-[#6a6a6a]">
            <Reference title="Force Majeure Clause Found" dot="bg-[#93e8c8]" />
            <p className="mt-[15px] text-[#9a9c9f]">
              15.11. Force Majeure. We shall not be in
              <br />
              default of any obligation under this...
            </p>
            <div className="mt-9">
              <Reference title="Custom" dot="bg-[#a3abb5]" />
            </div>
            <p className="mt-[18px]">
              15.12. Remedies. Money damages would
              <br />
              not be a sufficient remedy for a breach...
            </p>
          </div>
        </div>
      </div>
    </aside>
  );
}

function Reference({ title, dot }: { title: string; dot: string }) {
  return (
    <div className="flex items-center justify-between pr-6">
      <h5 className="text-[19px] font-semibold">{title}</h5>
      <span className={'h-3 w-3 rounded-full ' + dot} />
    </div>
  );
}

/* ---------- status bar ---------- */

function StatusBar() {
  return (
    <footer className="flex h-[46px] flex-none items-center border-t-2 border-[#a0a0a0] bg-linear-to-b from-[#e3e3e3] to-[#d7d7d7] pr-12 pl-12 text-[24px] text-[#4a4a4a]">
      <span>Page 10 of 19</span>
      <span className="ml-11">7759 words</span>
      <svg className="ml-[38px] h-7 w-8" viewBox="0 0 32 28" fill="none" stroke="#666" strokeWidth="2.5">
        <path d="M13 4v22l-3-2H2V3h8q3 0 3 2 0-2 3-2h8M13 26l3-2h9M20 8l10 12M30 8 20 20" />
      </svg>
      <span className="ml-11">English (United States)</span>
      <svg className="ml-11 h-7 w-8" viewBox="0 0 32 28" fill="none" stroke="#666" strokeWidth="2.5">
        <circle cx="6" cy="5" r="4" fill="#666" />
        <path d="M6 9v14M13 3h15v3h-5v16q0 4-4 4H2v-3h14" />
      </svg>
      <div className="ml-auto flex h-full items-center">
        <button className="flex items-center gap-3">
          <svg className="h-6 w-[30px]" viewBox="0 0 30 24" fill="none" stroke="#5c5c5c" strokeWidth="2.5">
            <path d="M2 2h26v20H2zM7 10V7h4M19 7h4v3M7 14v3h4M19 17h4v-3" />
          </svg>
          Focus
        </button>
        <button aria-label="Print layout" className="ml-5 flex h-full w-[74px] items-center justify-center bg-[#a3a3a3]">
          <svg className="h-7 w-7" viewBox="0 0 28 28" fill="none" stroke="#fff" strokeWidth="2">
            <path d="M2 2h24v24H2zM5 7h18M5 11h18M5 15h18M5 19h18M5 23h18" />
          </svg>
        </button>
        <div className="ml-5 flex items-center gap-10">
          <IconButton label="Web layout">
            <svg className="h-7 w-8" viewBox="0 0 32 28" fill="none" stroke="#5c5c5c" strokeWidth="2.5">
              <path d="M13 23H2V2h20v8M6 7h12M6 12h10M6 17h7" />
              <circle cx="23" cy="20" r="7" fill="#5c5c5c" />
              <path d="m20 16 4 4-2 5" stroke="#e0e0e0" strokeWidth="2" />
            </svg>
          </IconButton>
          <IconButton label="Outline">
            <svg className="h-6 w-8" viewBox="0 0 32 24" stroke="#5c5c5c" strokeWidth="2.5">
              <path d="M1 3h3M8 3h14M8 9h3M15 9h15M8 15h3M15 15h15M4 21h3M11 21h18" />
            </svg>
          </IconButton>
          <IconButton label="Draft">
            <svg className="h-6 w-7" viewBox="0 0 28 24" stroke="#5c5c5c" strokeWidth="2.5">
              <path d="M0 3h28M0 9h22M0 15h26M0 21h22" />
            </svg>
          </IconButton>
        </div>
        <button aria-label="Zoom out" className="mr-4 ml-10 h-1 w-4 bg-[#5c5c5c]" />
        <input
          type="range"
          aria-label="Zoom"
          min={0}
          max={100}
          defaultValue={59}
          className="h-6 w-[196px] appearance-none bg-transparent [&::-webkit-slider-runnable-track]:h-2 [&::-webkit-slider-runnable-track]:rounded-full [&::-webkit-slider-runnable-track]:bg-[#9b9b9b] [&::-webkit-slider-thumb]:-mt-2 [&::-webkit-slider-thumb]:h-6 [&::-webkit-slider-thumb]:w-6 [&::-webkit-slider-thumb]:appearance-none [&::-webkit-slider-thumb]:rounded-full [&::-webkit-slider-thumb]:border [&::-webkit-slider-thumb]:border-[#b5b5b5] [&::-webkit-slider-thumb]:bg-white"
        />
        <button aria-label="Zoom in" className="ml-4 flex">
          <svg className="h-4 w-4" viewBox="0 0 16 16" stroke="#5c5c5c" strokeWidth="4">
            <path d="M8 0v16M0 8h16" />
          </svg>
        </button>
        <span className="ml-8">170%</span>
      </div>
    </footer>
  );
}
